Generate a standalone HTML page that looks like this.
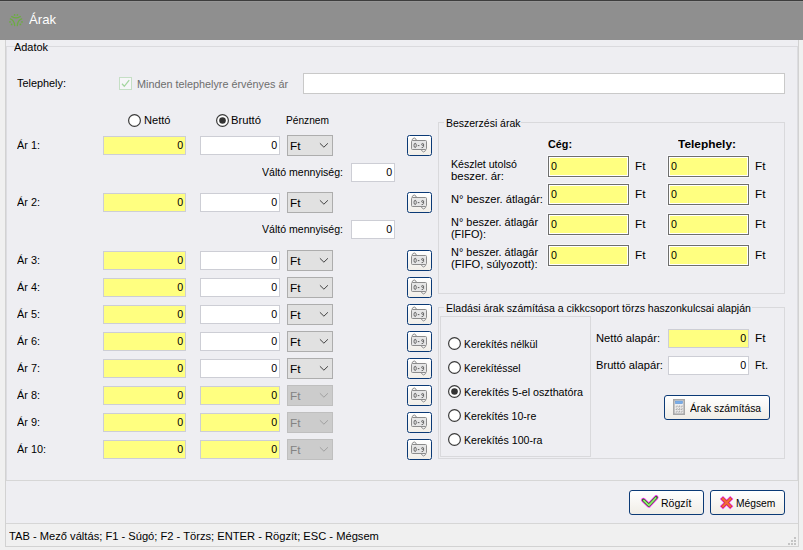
<!DOCTYPE html>
<html><head><meta charset="utf-8"><style>
html,body{margin:0;padding:0;}
body{width:803px;height:550px;overflow:hidden;position:relative;background:#f0f0f0;font-family:"Liberation Sans",sans-serif;}
.t{position:absolute;line-height:14px;white-space:nowrap;}
</style></head><body>
<div style="position:absolute;left:0;top:0;width:803px;height:40px;background:#8f8f8f"></div>
<div style="position:absolute;left:0;top:0;width:803px;height:1px;background:#3d3d3d"></div>
<div style="position:absolute;left:0;top:1px;width:803px;height:1px;background:#979797"></div>
<svg style="position:absolute;left:8px;top:13px" width="16" height="16" viewBox="0 0 16 16">
<g fill="none" stroke="#6cad40" stroke-width="1.25" stroke-linecap="round">
<path d="M3.7 3.5 Q8 6.4 12.3 3.5"/>
<path d="M2.3 5.8 Q6.2 6.8 6.7 12.6"/>
<path d="M13.7 5.8 Q9.8 6.8 9.3 12.6"/>
</g>
<g fill="#6cad40"><circle cx="6.6" cy="1.9" r="0.85"/><circle cx="9.4" cy="1.9" r="0.85"/>
<circle cx="2" cy="8.9" r="0.85"/><circle cx="14" cy="8.9" r="0.85"/>
<circle cx="3.6" cy="11.4" r="0.85"/><circle cx="12.4" cy="11.4" r="0.85"/></g>
</svg>
<div style="position:absolute;left:5px;top:40px;width:792px;height:506px;background:#eeeef2;border:1px solid #d2d2d2;border-top:none"></div>
<div style="position:absolute;left:6px;top:46px;width:792px;height:1px;background:#dadade"></div>
<div style="position:absolute;left:6px;top:47px;width:790px;height:433px;border-left:1px solid #dcdce0;border-right:1px solid #dcdce0"></div>
<div style="position:absolute;left:6px;top:480px;width:792px;height:1px;background:#d6d6d6"></div>
<div style="position:absolute;left:6px;top:523px;width:792px;height:1px;background:#d6d6d6"></div>
<div style="position:absolute;left:6px;top:524px;width:792px;height:22px;background:#f0f0f0"></div>
<div style="position:absolute;left:119px;top:77px;width:11px;height:11px;border:1px solid #c5dfc5;background:#f6f6f8"></div>
<svg style="position:absolute;left:119px;top:77px" width="13" height="13" viewBox="0 0 13 13"><path d="M3 6.8 L5.3 9.3 L10.2 3.2" fill="none" stroke="#a5d6a0" stroke-width="1.3"/></svg>
<div style="position:absolute;left:303px;top:73px;width:480px;height:19px;border:1px solid #c9c9c9;background:#fff"></div>
<svg style="position:absolute;left:128px;top:114px" width="13" height="13" viewBox="0 0 13 13"><circle cx="6.5" cy="6.5" r="5.9" fill="#fff" stroke="#3a3a3a" stroke-width="1.2"/></svg>
<svg style="position:absolute;left:216px;top:114px" width="13" height="13" viewBox="0 0 13 13"><circle cx="6.5" cy="6.5" r="5.9" fill="#fff" stroke="#3a3a3a" stroke-width="1.2"/><circle cx="6.5" cy="6.5" r="3.3" fill="#333"/></svg>
<div style="position:absolute;left:103px;top:136px;width:81px;height:17px;border:1px solid #cdced5;background:#ffff80;"></div>
<div style="position:absolute;left:200px;top:136px;width:78px;height:17px;border:1px solid #cdced5;background:#fff;"></div>
<div style="position:absolute;left:287px;top:135px;width:44px;height:19px;border:1px solid #adadad;background:#e1e1e1"></div>
<svg style="position:absolute;left:319px;top:142px" width="10" height="7" viewBox="0 0 10 7"><path d="M0.9 1.3 L4.9 5.2 L8.9 1.3" fill="none" stroke="#404040" stroke-width="1"/></svg>
<div style="position:absolute;left:407px;top:135px;width:23px;height:19px;border:1px solid #0b3a76;border-radius:2.5px;background:linear-gradient(#ffffff,#f1eee8)"></div>
<svg style="position:absolute;left:407px;top:135px" width="25" height="21" viewBox="0 0 25 21">
<path d="M5.3 5.6 L5.3 4.2 Q7.2 1.6 9.1 4.2 L9.1 5.6" fill="#f4f4f4" stroke="#8c8c8c" stroke-width="1"/>
<path d="M14.6 14.4 L14.6 15.6 Q16.6 18.3 18.6 15.6 L18.6 14.4" fill="#f4f4f4" stroke="#8c8c8c" stroke-width="1"/>
<rect x="4.5" y="5.5" width="15" height="9" rx="1" fill="#e6e6e6" stroke="#8c8c8c" stroke-width="1"/>
<ellipse cx="8.15" cy="10.4" rx="1.15" ry="2.15" fill="none" stroke="#5e5e5e" stroke-width="0.9"/>
<path d="M10.8 10.6 L12.4 10.6" stroke="#5e5e5e" stroke-width="1"/>
<circle cx="15.6" cy="9.4" r="0.95" fill="none" stroke="#5e5e5e" stroke-width="0.9"/>
<path d="M16.55 9.4 L16.55 11.6 Q16.4 12.6 14.6 12.6" fill="none" stroke="#5e5e5e" stroke-width="0.9"/>
</svg>
<div style="position:absolute;left:351px;top:163px;width:42px;height:17px;border:1px solid #cdced5;background:#fff;"></div>
<div style="position:absolute;left:103px;top:193px;width:81px;height:17px;border:1px solid #cdced5;background:#ffff80;"></div>
<div style="position:absolute;left:200px;top:193px;width:78px;height:17px;border:1px solid #cdced5;background:#fff;"></div>
<div style="position:absolute;left:287px;top:192px;width:44px;height:19px;border:1px solid #adadad;background:#e1e1e1"></div>
<svg style="position:absolute;left:319px;top:199px" width="10" height="7" viewBox="0 0 10 7"><path d="M0.9 1.3 L4.9 5.2 L8.9 1.3" fill="none" stroke="#404040" stroke-width="1"/></svg>
<div style="position:absolute;left:407px;top:192px;width:23px;height:19px;border:1px solid #0b3a76;border-radius:2.5px;background:linear-gradient(#ffffff,#f1eee8)"></div>
<svg style="position:absolute;left:407px;top:192px" width="25" height="21" viewBox="0 0 25 21">
<path d="M5.3 5.6 L5.3 4.2 Q7.2 1.6 9.1 4.2 L9.1 5.6" fill="#f4f4f4" stroke="#8c8c8c" stroke-width="1"/>
<path d="M14.6 14.4 L14.6 15.6 Q16.6 18.3 18.6 15.6 L18.6 14.4" fill="#f4f4f4" stroke="#8c8c8c" stroke-width="1"/>
<rect x="4.5" y="5.5" width="15" height="9" rx="1" fill="#e6e6e6" stroke="#8c8c8c" stroke-width="1"/>
<ellipse cx="8.15" cy="10.4" rx="1.15" ry="2.15" fill="none" stroke="#5e5e5e" stroke-width="0.9"/>
<path d="M10.8 10.6 L12.4 10.6" stroke="#5e5e5e" stroke-width="1"/>
<circle cx="15.6" cy="9.4" r="0.95" fill="none" stroke="#5e5e5e" stroke-width="0.9"/>
<path d="M16.55 9.4 L16.55 11.6 Q16.4 12.6 14.6 12.6" fill="none" stroke="#5e5e5e" stroke-width="0.9"/>
</svg>
<div style="position:absolute;left:351px;top:220px;width:42px;height:17px;border:1px solid #cdced5;background:#fff;"></div>
<div style="position:absolute;left:103px;top:251px;width:81px;height:17px;border:1px solid #cdced5;background:#ffff80;"></div>
<div style="position:absolute;left:200px;top:251px;width:78px;height:17px;border:1px solid #cdced5;background:#fff;"></div>
<div style="position:absolute;left:287px;top:250px;width:44px;height:19px;border:1px solid #adadad;background:#e1e1e1"></div>
<svg style="position:absolute;left:319px;top:257px" width="10" height="7" viewBox="0 0 10 7"><path d="M0.9 1.3 L4.9 5.2 L8.9 1.3" fill="none" stroke="#404040" stroke-width="1"/></svg>
<div style="position:absolute;left:407px;top:250px;width:23px;height:19px;border:1px solid #0b3a76;border-radius:2.5px;background:linear-gradient(#ffffff,#f1eee8)"></div>
<svg style="position:absolute;left:407px;top:250px" width="25" height="21" viewBox="0 0 25 21">
<path d="M5.3 5.6 L5.3 4.2 Q7.2 1.6 9.1 4.2 L9.1 5.6" fill="#f4f4f4" stroke="#8c8c8c" stroke-width="1"/>
<path d="M14.6 14.4 L14.6 15.6 Q16.6 18.3 18.6 15.6 L18.6 14.4" fill="#f4f4f4" stroke="#8c8c8c" stroke-width="1"/>
<rect x="4.5" y="5.5" width="15" height="9" rx="1" fill="#e6e6e6" stroke="#8c8c8c" stroke-width="1"/>
<ellipse cx="8.15" cy="10.4" rx="1.15" ry="2.15" fill="none" stroke="#5e5e5e" stroke-width="0.9"/>
<path d="M10.8 10.6 L12.4 10.6" stroke="#5e5e5e" stroke-width="1"/>
<circle cx="15.6" cy="9.4" r="0.95" fill="none" stroke="#5e5e5e" stroke-width="0.9"/>
<path d="M16.55 9.4 L16.55 11.6 Q16.4 12.6 14.6 12.6" fill="none" stroke="#5e5e5e" stroke-width="0.9"/>
</svg>
<div style="position:absolute;left:103px;top:278px;width:81px;height:17px;border:1px solid #cdced5;background:#ffff80;"></div>
<div style="position:absolute;left:200px;top:278px;width:78px;height:17px;border:1px solid #cdced5;background:#fff;"></div>
<div style="position:absolute;left:287px;top:277px;width:44px;height:19px;border:1px solid #adadad;background:#e1e1e1"></div>
<svg style="position:absolute;left:319px;top:284px" width="10" height="7" viewBox="0 0 10 7"><path d="M0.9 1.3 L4.9 5.2 L8.9 1.3" fill="none" stroke="#404040" stroke-width="1"/></svg>
<div style="position:absolute;left:407px;top:277px;width:23px;height:19px;border:1px solid #0b3a76;border-radius:2.5px;background:linear-gradient(#ffffff,#f1eee8)"></div>
<svg style="position:absolute;left:407px;top:277px" width="25" height="21" viewBox="0 0 25 21">
<path d="M5.3 5.6 L5.3 4.2 Q7.2 1.6 9.1 4.2 L9.1 5.6" fill="#f4f4f4" stroke="#8c8c8c" stroke-width="1"/>
<path d="M14.6 14.4 L14.6 15.6 Q16.6 18.3 18.6 15.6 L18.6 14.4" fill="#f4f4f4" stroke="#8c8c8c" stroke-width="1"/>
<rect x="4.5" y="5.5" width="15" height="9" rx="1" fill="#e6e6e6" stroke="#8c8c8c" stroke-width="1"/>
<ellipse cx="8.15" cy="10.4" rx="1.15" ry="2.15" fill="none" stroke="#5e5e5e" stroke-width="0.9"/>
<path d="M10.8 10.6 L12.4 10.6" stroke="#5e5e5e" stroke-width="1"/>
<circle cx="15.6" cy="9.4" r="0.95" fill="none" stroke="#5e5e5e" stroke-width="0.9"/>
<path d="M16.55 9.4 L16.55 11.6 Q16.4 12.6 14.6 12.6" fill="none" stroke="#5e5e5e" stroke-width="0.9"/>
</svg>
<div style="position:absolute;left:103px;top:305px;width:81px;height:17px;border:1px solid #cdced5;background:#ffff80;"></div>
<div style="position:absolute;left:200px;top:305px;width:78px;height:17px;border:1px solid #cdced5;background:#fff;"></div>
<div style="position:absolute;left:287px;top:304px;width:44px;height:19px;border:1px solid #adadad;background:#e1e1e1"></div>
<svg style="position:absolute;left:319px;top:311px" width="10" height="7" viewBox="0 0 10 7"><path d="M0.9 1.3 L4.9 5.2 L8.9 1.3" fill="none" stroke="#404040" stroke-width="1"/></svg>
<div style="position:absolute;left:407px;top:304px;width:23px;height:19px;border:1px solid #0b3a76;border-radius:2.5px;background:linear-gradient(#ffffff,#f1eee8)"></div>
<svg style="position:absolute;left:407px;top:304px" width="25" height="21" viewBox="0 0 25 21">
<path d="M5.3 5.6 L5.3 4.2 Q7.2 1.6 9.1 4.2 L9.1 5.6" fill="#f4f4f4" stroke="#8c8c8c" stroke-width="1"/>
<path d="M14.6 14.4 L14.6 15.6 Q16.6 18.3 18.6 15.6 L18.6 14.4" fill="#f4f4f4" stroke="#8c8c8c" stroke-width="1"/>
<rect x="4.5" y="5.5" width="15" height="9" rx="1" fill="#e6e6e6" stroke="#8c8c8c" stroke-width="1"/>
<ellipse cx="8.15" cy="10.4" rx="1.15" ry="2.15" fill="none" stroke="#5e5e5e" stroke-width="0.9"/>
<path d="M10.8 10.6 L12.4 10.6" stroke="#5e5e5e" stroke-width="1"/>
<circle cx="15.6" cy="9.4" r="0.95" fill="none" stroke="#5e5e5e" stroke-width="0.9"/>
<path d="M16.55 9.4 L16.55 11.6 Q16.4 12.6 14.6 12.6" fill="none" stroke="#5e5e5e" stroke-width="0.9"/>
</svg>
<div style="position:absolute;left:103px;top:332px;width:81px;height:17px;border:1px solid #cdced5;background:#ffff80;"></div>
<div style="position:absolute;left:200px;top:332px;width:78px;height:17px;border:1px solid #cdced5;background:#fff;"></div>
<div style="position:absolute;left:287px;top:331px;width:44px;height:19px;border:1px solid #adadad;background:#e1e1e1"></div>
<svg style="position:absolute;left:319px;top:338px" width="10" height="7" viewBox="0 0 10 7"><path d="M0.9 1.3 L4.9 5.2 L8.9 1.3" fill="none" stroke="#404040" stroke-width="1"/></svg>
<div style="position:absolute;left:407px;top:331px;width:23px;height:19px;border:1px solid #0b3a76;border-radius:2.5px;background:linear-gradient(#ffffff,#f1eee8)"></div>
<svg style="position:absolute;left:407px;top:331px" width="25" height="21" viewBox="0 0 25 21">
<path d="M5.3 5.6 L5.3 4.2 Q7.2 1.6 9.1 4.2 L9.1 5.6" fill="#f4f4f4" stroke="#8c8c8c" stroke-width="1"/>
<path d="M14.6 14.4 L14.6 15.6 Q16.6 18.3 18.6 15.6 L18.6 14.4" fill="#f4f4f4" stroke="#8c8c8c" stroke-width="1"/>
<rect x="4.5" y="5.5" width="15" height="9" rx="1" fill="#e6e6e6" stroke="#8c8c8c" stroke-width="1"/>
<ellipse cx="8.15" cy="10.4" rx="1.15" ry="2.15" fill="none" stroke="#5e5e5e" stroke-width="0.9"/>
<path d="M10.8 10.6 L12.4 10.6" stroke="#5e5e5e" stroke-width="1"/>
<circle cx="15.6" cy="9.4" r="0.95" fill="none" stroke="#5e5e5e" stroke-width="0.9"/>
<path d="M16.55 9.4 L16.55 11.6 Q16.4 12.6 14.6 12.6" fill="none" stroke="#5e5e5e" stroke-width="0.9"/>
</svg>
<div style="position:absolute;left:103px;top:359px;width:81px;height:17px;border:1px solid #cdced5;background:#ffff80;"></div>
<div style="position:absolute;left:200px;top:359px;width:78px;height:17px;border:1px solid #cdced5;background:#fff;"></div>
<div style="position:absolute;left:287px;top:358px;width:44px;height:19px;border:1px solid #adadad;background:#e1e1e1"></div>
<svg style="position:absolute;left:319px;top:365px" width="10" height="7" viewBox="0 0 10 7"><path d="M0.9 1.3 L4.9 5.2 L8.9 1.3" fill="none" stroke="#404040" stroke-width="1"/></svg>
<div style="position:absolute;left:407px;top:358px;width:23px;height:19px;border:1px solid #0b3a76;border-radius:2.5px;background:linear-gradient(#ffffff,#f1eee8)"></div>
<svg style="position:absolute;left:407px;top:358px" width="25" height="21" viewBox="0 0 25 21">
<path d="M5.3 5.6 L5.3 4.2 Q7.2 1.6 9.1 4.2 L9.1 5.6" fill="#f4f4f4" stroke="#8c8c8c" stroke-width="1"/>
<path d="M14.6 14.4 L14.6 15.6 Q16.6 18.3 18.6 15.6 L18.6 14.4" fill="#f4f4f4" stroke="#8c8c8c" stroke-width="1"/>
<rect x="4.5" y="5.5" width="15" height="9" rx="1" fill="#e6e6e6" stroke="#8c8c8c" stroke-width="1"/>
<ellipse cx="8.15" cy="10.4" rx="1.15" ry="2.15" fill="none" stroke="#5e5e5e" stroke-width="0.9"/>
<path d="M10.8 10.6 L12.4 10.6" stroke="#5e5e5e" stroke-width="1"/>
<circle cx="15.6" cy="9.4" r="0.95" fill="none" stroke="#5e5e5e" stroke-width="0.9"/>
<path d="M16.55 9.4 L16.55 11.6 Q16.4 12.6 14.6 12.6" fill="none" stroke="#5e5e5e" stroke-width="0.9"/>
</svg>
<div style="position:absolute;left:103px;top:386px;width:81px;height:17px;border:1px solid #cdced5;background:#ffff80;"></div>
<div style="position:absolute;left:200px;top:386px;width:78px;height:17px;border:1px solid #cdced5;background:#ffff80;"></div>
<div style="position:absolute;left:287px;top:385px;width:44px;height:19px;border:1px solid #bfbfbf;background:#cccccc"></div>
<svg style="position:absolute;left:319px;top:392px" width="10" height="7" viewBox="0 0 10 7"><path d="M0.9 1.3 L4.9 5.2 L8.9 1.3" fill="none" stroke="#a0a0a0" stroke-width="1"/></svg>
<div style="position:absolute;left:407px;top:385px;width:23px;height:19px;border:1px solid #0b3a76;border-radius:2.5px;background:linear-gradient(#ffffff,#f1eee8)"></div>
<svg style="position:absolute;left:407px;top:385px" width="25" height="21" viewBox="0 0 25 21">
<path d="M5.3 5.6 L5.3 4.2 Q7.2 1.6 9.1 4.2 L9.1 5.6" fill="#f4f4f4" stroke="#8c8c8c" stroke-width="1"/>
<path d="M14.6 14.4 L14.6 15.6 Q16.6 18.3 18.6 15.6 L18.6 14.4" fill="#f4f4f4" stroke="#8c8c8c" stroke-width="1"/>
<rect x="4.5" y="5.5" width="15" height="9" rx="1" fill="#e6e6e6" stroke="#8c8c8c" stroke-width="1"/>
<ellipse cx="8.15" cy="10.4" rx="1.15" ry="2.15" fill="none" stroke="#5e5e5e" stroke-width="0.9"/>
<path d="M10.8 10.6 L12.4 10.6" stroke="#5e5e5e" stroke-width="1"/>
<circle cx="15.6" cy="9.4" r="0.95" fill="none" stroke="#5e5e5e" stroke-width="0.9"/>
<path d="M16.55 9.4 L16.55 11.6 Q16.4 12.6 14.6 12.6" fill="none" stroke="#5e5e5e" stroke-width="0.9"/>
</svg>
<div style="position:absolute;left:103px;top:413px;width:81px;height:17px;border:1px solid #cdced5;background:#ffff80;"></div>
<div style="position:absolute;left:200px;top:413px;width:78px;height:17px;border:1px solid #cdced5;background:#ffff80;"></div>
<div style="position:absolute;left:287px;top:412px;width:44px;height:19px;border:1px solid #bfbfbf;background:#cccccc"></div>
<svg style="position:absolute;left:319px;top:419px" width="10" height="7" viewBox="0 0 10 7"><path d="M0.9 1.3 L4.9 5.2 L8.9 1.3" fill="none" stroke="#a0a0a0" stroke-width="1"/></svg>
<div style="position:absolute;left:407px;top:412px;width:23px;height:19px;border:1px solid #0b3a76;border-radius:2.5px;background:linear-gradient(#ffffff,#f1eee8)"></div>
<svg style="position:absolute;left:407px;top:412px" width="25" height="21" viewBox="0 0 25 21">
<path d="M5.3 5.6 L5.3 4.2 Q7.2 1.6 9.1 4.2 L9.1 5.6" fill="#f4f4f4" stroke="#8c8c8c" stroke-width="1"/>
<path d="M14.6 14.4 L14.6 15.6 Q16.6 18.3 18.6 15.6 L18.6 14.4" fill="#f4f4f4" stroke="#8c8c8c" stroke-width="1"/>
<rect x="4.5" y="5.5" width="15" height="9" rx="1" fill="#e6e6e6" stroke="#8c8c8c" stroke-width="1"/>
<ellipse cx="8.15" cy="10.4" rx="1.15" ry="2.15" fill="none" stroke="#5e5e5e" stroke-width="0.9"/>
<path d="M10.8 10.6 L12.4 10.6" stroke="#5e5e5e" stroke-width="1"/>
<circle cx="15.6" cy="9.4" r="0.95" fill="none" stroke="#5e5e5e" stroke-width="0.9"/>
<path d="M16.55 9.4 L16.55 11.6 Q16.4 12.6 14.6 12.6" fill="none" stroke="#5e5e5e" stroke-width="0.9"/>
</svg>
<div style="position:absolute;left:103px;top:440px;width:81px;height:17px;border:1px solid #cdced5;background:#ffff80;"></div>
<div style="position:absolute;left:200px;top:440px;width:78px;height:17px;border:1px solid #cdced5;background:#ffff80;"></div>
<div style="position:absolute;left:287px;top:439px;width:44px;height:19px;border:1px solid #bfbfbf;background:#cccccc"></div>
<svg style="position:absolute;left:319px;top:446px" width="10" height="7" viewBox="0 0 10 7"><path d="M0.9 1.3 L4.9 5.2 L8.9 1.3" fill="none" stroke="#a0a0a0" stroke-width="1"/></svg>
<div style="position:absolute;left:407px;top:439px;width:23px;height:19px;border:1px solid #0b3a76;border-radius:2.5px;background:linear-gradient(#ffffff,#f1eee8)"></div>
<svg style="position:absolute;left:407px;top:439px" width="25" height="21" viewBox="0 0 25 21">
<path d="M5.3 5.6 L5.3 4.2 Q7.2 1.6 9.1 4.2 L9.1 5.6" fill="#f4f4f4" stroke="#8c8c8c" stroke-width="1"/>
<path d="M14.6 14.4 L14.6 15.6 Q16.6 18.3 18.6 15.6 L18.6 14.4" fill="#f4f4f4" stroke="#8c8c8c" stroke-width="1"/>
<rect x="4.5" y="5.5" width="15" height="9" rx="1" fill="#e6e6e6" stroke="#8c8c8c" stroke-width="1"/>
<ellipse cx="8.15" cy="10.4" rx="1.15" ry="2.15" fill="none" stroke="#5e5e5e" stroke-width="0.9"/>
<path d="M10.8 10.6 L12.4 10.6" stroke="#5e5e5e" stroke-width="1"/>
<circle cx="15.6" cy="9.4" r="0.95" fill="none" stroke="#5e5e5e" stroke-width="0.9"/>
<path d="M16.55 9.4 L16.55 11.6 Q16.4 12.6 14.6 12.6" fill="none" stroke="#5e5e5e" stroke-width="0.9"/>
</svg>
<div style="position:absolute;left:438px;top:122px;width:345px;height:170px;border:1px solid #d9d9dc"></div>
<div style="position:absolute;left:444px;top:116px;width:77px;height:12px;background:#eeeef2"></div>
<div style="position:absolute;left:548px;top:156px;width:79px;height:19px;border:1px solid #6e6e6e;background:#ffff80;box-shadow:inset 0 0 0 1px #fff,0 0 0 1px #f7f7f9"></div>
<div style="position:absolute;left:668px;top:156px;width:79px;height:19px;border:1px solid #6e6e6e;background:#ffff80;box-shadow:inset 0 0 0 1px #fff,0 0 0 1px #f7f7f9"></div>
<div style="position:absolute;left:548px;top:184px;width:79px;height:19px;border:1px solid #6e6e6e;background:#ffff80;box-shadow:inset 0 0 0 1px #fff,0 0 0 1px #f7f7f9"></div>
<div style="position:absolute;left:668px;top:184px;width:79px;height:19px;border:1px solid #6e6e6e;background:#ffff80;box-shadow:inset 0 0 0 1px #fff,0 0 0 1px #f7f7f9"></div>
<div style="position:absolute;left:548px;top:214px;width:79px;height:19px;border:1px solid #6e6e6e;background:#ffff80;box-shadow:inset 0 0 0 1px #fff,0 0 0 1px #f7f7f9"></div>
<div style="position:absolute;left:668px;top:214px;width:79px;height:19px;border:1px solid #6e6e6e;background:#ffff80;box-shadow:inset 0 0 0 1px #fff,0 0 0 1px #f7f7f9"></div>
<div style="position:absolute;left:548px;top:245px;width:79px;height:19px;border:1px solid #6e6e6e;background:#ffff80;box-shadow:inset 0 0 0 1px #fff,0 0 0 1px #f7f7f9"></div>
<div style="position:absolute;left:668px;top:245px;width:79px;height:19px;border:1px solid #6e6e6e;background:#ffff80;box-shadow:inset 0 0 0 1px #fff,0 0 0 1px #f7f7f9"></div>
<div style="position:absolute;left:438px;top:307px;width:345px;height:150px;border:1px solid #d9d9dc"></div>
<div style="position:absolute;left:444px;top:302px;width:308px;height:12px;background:#eeeef2"></div>
<div style="position:absolute;left:440px;top:316px;width:149px;height:139px;border:1px solid #d9d9dc"></div>
<svg style="position:absolute;left:448px;top:337px" width="13" height="13" viewBox="0 0 13 13"><circle cx="6.5" cy="6.5" r="5.9" fill="#fff" stroke="#3a3a3a" stroke-width="1.2"/></svg>
<svg style="position:absolute;left:448px;top:361px" width="13" height="13" viewBox="0 0 13 13"><circle cx="6.5" cy="6.5" r="5.9" fill="#fff" stroke="#3a3a3a" stroke-width="1.2"/></svg>
<svg style="position:absolute;left:448px;top:385px" width="13" height="13" viewBox="0 0 13 13"><circle cx="6.5" cy="6.5" r="5.9" fill="#fff" stroke="#3a3a3a" stroke-width="1.2"/><circle cx="6.5" cy="6.5" r="3.3" fill="#333"/></svg>
<svg style="position:absolute;left:448px;top:409px" width="13" height="13" viewBox="0 0 13 13"><circle cx="6.5" cy="6.5" r="5.9" fill="#fff" stroke="#3a3a3a" stroke-width="1.2"/></svg>
<svg style="position:absolute;left:448px;top:433px" width="13" height="13" viewBox="0 0 13 13"><circle cx="6.5" cy="6.5" r="5.9" fill="#fff" stroke="#3a3a3a" stroke-width="1.2"/></svg>
<div style="position:absolute;left:668px;top:329px;width:79px;height:17px;border:1px solid #cdced5;background:#ffff80;"></div>
<div style="position:absolute;left:668px;top:356px;width:79px;height:17px;border:1px solid #cdced5;background:#fff;"></div>
<div style="position:absolute;left:664px;top:395px;width:104px;height:23px;border:1px solid #0b3a76;border-radius:3px;background:linear-gradient(#ffffff,#f0ede6)"></div>
<svg style="position:absolute;left:673px;top:399px" width="13" height="17" viewBox="0 0 13 17">
<rect x="0.8" y="0.8" width="10.4" height="14.4" fill="#ededed" stroke="#a8a8a8" stroke-width="1.6"/>
<rect x="2.4" y="2.1" width="7.2" height="2.6" fill="#78aeea" stroke="#5c90d0" stroke-width="0.5"/>
<path d="M2.6 7.9 L4.1 7.9 L4.1 6.4" fill="none" stroke="#9a9a9a" stroke-width="0.7"/><path d="M5.1 7.9 L6.6 7.9 L6.6 6.4" fill="none" stroke="#9a9a9a" stroke-width="0.7"/><path d="M7.6 7.9 L9.1 7.9 L9.1 6.4" fill="none" stroke="#9a9a9a" stroke-width="0.7"/><path d="M2.6 10.5 L4.1 10.5 L4.1 9.0" fill="none" stroke="#9a9a9a" stroke-width="0.7"/><path d="M5.1 10.5 L6.6 10.5 L6.6 9.0" fill="none" stroke="#9a9a9a" stroke-width="0.7"/><path d="M7.6 10.5 L9.1 10.5 L9.1 9.0" fill="none" stroke="#9a9a9a" stroke-width="0.7"/><path d="M2.6 13.1 L4.1 13.1 L4.1 11.6" fill="none" stroke="#9a9a9a" stroke-width="0.7"/><path d="M5.1 13.1 L6.6 13.1 L6.6 11.6" fill="none" stroke="#9a9a9a" stroke-width="0.7"/><path d="M7.6 13.1 L9.1 13.1 L9.1 11.6" fill="none" stroke="#9a9a9a" stroke-width="0.7"/>
</svg>
<div style="position:absolute;left:629px;top:490px;width:73px;height:23px;border:1px solid #0b3a76;border-radius:3px;background:linear-gradient(#ffffff,#f0ede6)"></div>
<svg style="position:absolute;left:640px;top:494px" width="20" height="16" viewBox="0 0 20 16">
<path d="M3.4 6.1 L8.9 11.3 L16.2 3.5" fill="none" stroke="#ff20ff" stroke-width="4.6" stroke-linejoin="round" stroke-linecap="round"/>
<path d="M3.4 6.1 L8.9 11.3 L16.2 3.5" fill="none" stroke="#2f7a1f" stroke-width="3.1" stroke-linejoin="round" stroke-linecap="round"/>
<path d="M3.4 6.1 L8.9 11.3 L16.2 3.5" fill="none" stroke="#90e870" stroke-width="1.7" stroke-linejoin="round"/>
</svg>
<div style="position:absolute;left:710px;top:490px;width:73px;height:23px;border:1px solid #0b3a76;border-radius:3px;background:linear-gradient(#ffffff,#f0ede6)"></div>
<svg style="position:absolute;left:718px;top:494px" width="18" height="18" viewBox="0 0 18 18">
<path d="M5 5 L12.2 12.2 M12.2 5 L5 12.2" fill="none" stroke="#f030f0" stroke-width="4.4" stroke-linecap="square"/>
<path d="M5 5 L12.2 12.2 M12.2 5 L5 12.2" fill="none" stroke="#c83a18" stroke-width="3.0" stroke-linecap="square"/>
<path d="M5 5 L12.2 12.2 M12.2 5 L5 12.2" fill="none" stroke="#f26a3a" stroke-width="2.0" stroke-linecap="square"/>
</svg>
<svg style="position:absolute;left:787px;top:536px" width="10" height="10" viewBox="0 0 10 10"><g fill="#c4c4c4">
<rect x="7" y="1" width="2" height="2"/><rect x="4" y="4" width="2" height="2"/><rect x="7" y="4" width="2" height="2"/>
<rect x="1" y="7" width="2" height="2"/><rect x="4" y="7" width="2" height="2"/><rect x="7" y="7" width="2" height="2"/></g></svg>
<div class="t" style="left:29px;top:13px;transform-origin:left;transform:scaleX(1.010);font-size:13px;color:#ffffff">Árak</div>
<div class="t" style="left:14px;top:40px;transform-origin:left;transform:scaleX(0.993);font-size:11px;color:#000">Adatok</div>
<div class="t" style="left:17px;top:76px;transform-origin:left;transform:scaleX(0.989);font-size:11px;color:#000">Telephely:</div>
<div class="t" style="left:137px;top:77px;transform-origin:left;transform:scaleX(0.984);font-size:11px;color:#6d6d6d">Minden telephelyre érvényes ár</div>
<div class="t" style="left:143.5px;top:113px;transform-origin:left;transform:scaleX(1.008);font-size:11px;color:#000">Nettó</div>
<div class="t" style="left:231px;top:113px;transform-origin:left;transform:scaleX(1.022);font-size:11px;color:#000">Bruttó</div>
<div class="t" style="left:286px;top:113px;transform-origin:left;transform:scaleX(0.925);font-size:11px;color:#000">Pénznem</div>
<div class="t" style="left:17px;top:138px;transform-origin:left;transform:scaleX(0.990);font-size:11px;color:#000">Ár 1:</div>
<div class="t" style="right:620px;top:138px;transform-origin:right;transform:scaleX(0.970);font-size:11px;color:#000">0</div>
<div class="t" style="right:526px;top:138px;transform-origin:right;transform:scaleX(0.970);font-size:11px;color:#000">0</div>
<div class="t" style="left:289.8px;top:139px;transform-origin:left;transform:scaleX(1.073);font-size:11px;color:#000">Ft</div>
<div class="t" style="left:262px;top:165px;transform-origin:left;transform:scaleX(0.960);font-size:11px;color:#000">Váltó mennyiség:</div>
<div class="t" style="right:411px;top:165px;transform-origin:right;transform:scaleX(0.970);font-size:11px;color:#000">0</div>
<div class="t" style="left:17px;top:195px;transform-origin:left;transform:scaleX(0.990);font-size:11px;color:#000">Ár 2:</div>
<div class="t" style="right:620px;top:195px;transform-origin:right;transform:scaleX(0.970);font-size:11px;color:#000">0</div>
<div class="t" style="right:526px;top:195px;transform-origin:right;transform:scaleX(0.970);font-size:11px;color:#000">0</div>
<div class="t" style="left:289.8px;top:196px;transform-origin:left;transform:scaleX(1.073);font-size:11px;color:#000">Ft</div>
<div class="t" style="left:262px;top:222px;transform-origin:left;transform:scaleX(0.960);font-size:11px;color:#000">Váltó mennyiség:</div>
<div class="t" style="right:411px;top:222px;transform-origin:right;transform:scaleX(0.970);font-size:11px;color:#000">0</div>
<div class="t" style="left:17px;top:253px;transform-origin:left;transform:scaleX(0.990);font-size:11px;color:#000">Ár 3:</div>
<div class="t" style="right:620px;top:253px;transform-origin:right;transform:scaleX(0.970);font-size:11px;color:#000">0</div>
<div class="t" style="right:526px;top:253px;transform-origin:right;transform:scaleX(0.970);font-size:11px;color:#000">0</div>
<div class="t" style="left:289.8px;top:254px;transform-origin:left;transform:scaleX(1.073);font-size:11px;color:#000">Ft</div>
<div class="t" style="left:17px;top:280px;transform-origin:left;transform:scaleX(0.990);font-size:11px;color:#000">Ár 4:</div>
<div class="t" style="right:620px;top:280px;transform-origin:right;transform:scaleX(0.970);font-size:11px;color:#000">0</div>
<div class="t" style="right:526px;top:280px;transform-origin:right;transform:scaleX(0.970);font-size:11px;color:#000">0</div>
<div class="t" style="left:289.8px;top:281px;transform-origin:left;transform:scaleX(1.073);font-size:11px;color:#000">Ft</div>
<div class="t" style="left:17px;top:307px;transform-origin:left;transform:scaleX(0.990);font-size:11px;color:#000">Ár 5:</div>
<div class="t" style="right:620px;top:307px;transform-origin:right;transform:scaleX(0.970);font-size:11px;color:#000">0</div>
<div class="t" style="right:526px;top:307px;transform-origin:right;transform:scaleX(0.970);font-size:11px;color:#000">0</div>
<div class="t" style="left:289.8px;top:308px;transform-origin:left;transform:scaleX(1.073);font-size:11px;color:#000">Ft</div>
<div class="t" style="left:17px;top:334px;transform-origin:left;transform:scaleX(0.990);font-size:11px;color:#000">Ár 6:</div>
<div class="t" style="right:620px;top:334px;transform-origin:right;transform:scaleX(0.970);font-size:11px;color:#000">0</div>
<div class="t" style="right:526px;top:334px;transform-origin:right;transform:scaleX(0.970);font-size:11px;color:#000">0</div>
<div class="t" style="left:289.8px;top:335px;transform-origin:left;transform:scaleX(1.073);font-size:11px;color:#000">Ft</div>
<div class="t" style="left:17px;top:361px;transform-origin:left;transform:scaleX(0.990);font-size:11px;color:#000">Ár 7:</div>
<div class="t" style="right:620px;top:361px;transform-origin:right;transform:scaleX(0.970);font-size:11px;color:#000">0</div>
<div class="t" style="right:526px;top:361px;transform-origin:right;transform:scaleX(0.970);font-size:11px;color:#000">0</div>
<div class="t" style="left:289.8px;top:362px;transform-origin:left;transform:scaleX(1.073);font-size:11px;color:#000">Ft</div>
<div class="t" style="left:17px;top:388px;transform-origin:left;transform:scaleX(0.990);font-size:11px;color:#000">Ár 8:</div>
<div class="t" style="right:620px;top:388px;transform-origin:right;transform:scaleX(0.970);font-size:11px;color:#000">0</div>
<div class="t" style="right:526px;top:388px;transform-origin:right;transform:scaleX(0.970);font-size:11px;color:#000">0</div>
<div class="t" style="left:289.8px;top:389px;transform-origin:left;transform:scaleX(1.073);font-size:11px;color:#838383">Ft</div>
<div class="t" style="left:17px;top:415px;transform-origin:left;transform:scaleX(0.990);font-size:11px;color:#000">Ár 9:</div>
<div class="t" style="right:620px;top:415px;transform-origin:right;transform:scaleX(0.970);font-size:11px;color:#000">0</div>
<div class="t" style="right:526px;top:415px;transform-origin:right;transform:scaleX(0.970);font-size:11px;color:#000">0</div>
<div class="t" style="left:289.8px;top:416px;transform-origin:left;transform:scaleX(1.073);font-size:11px;color:#838383">Ft</div>
<div class="t" style="left:17px;top:442px;transform-origin:left;transform:scaleX(0.988);font-size:11px;color:#000">Ár 10:</div>
<div class="t" style="right:620px;top:442px;transform-origin:right;transform:scaleX(0.970);font-size:11px;color:#000">0</div>
<div class="t" style="right:526px;top:442px;transform-origin:right;transform:scaleX(0.970);font-size:11px;color:#000">0</div>
<div class="t" style="left:289.8px;top:443px;transform-origin:left;transform:scaleX(1.073);font-size:11px;color:#838383">Ft</div>
<div class="t" style="left:445.5px;top:116px;transform-origin:left;transform:scaleX(0.952);font-size:11px;color:#000">Beszerzési árak</div>
<div class="t" style="left:548px;top:137px;transform-origin:left;transform:scaleX(0.981);font-size:11px;font-weight:bold;color:#000">Cég:</div>
<div class="t" style="left:678px;top:137px;transform-origin:left;transform:scaleX(1.082);font-size:11px;font-weight:bold;color:#000">Telephely:</div>
<div class="t" style="left:551px;top:159px;transform-origin:left;transform:scaleX(0.970);font-size:11px;color:#000">0</div>
<div class="t" style="left:671px;top:159px;transform-origin:left;transform:scaleX(0.970);font-size:11px;color:#000">0</div>
<div class="t" style="left:635px;top:159px;transform-origin:left;transform:scaleX(1.073);font-size:11px;color:#000">Ft</div>
<div class="t" style="left:755px;top:159px;transform-origin:left;transform:scaleX(1.073);font-size:11px;color:#000">Ft</div>
<div class="t" style="left:551px;top:187px;transform-origin:left;transform:scaleX(0.970);font-size:11px;color:#000">0</div>
<div class="t" style="left:671px;top:187px;transform-origin:left;transform:scaleX(0.970);font-size:11px;color:#000">0</div>
<div class="t" style="left:635px;top:187px;transform-origin:left;transform:scaleX(1.073);font-size:11px;color:#000">Ft</div>
<div class="t" style="left:755px;top:187px;transform-origin:left;transform:scaleX(1.073);font-size:11px;color:#000">Ft</div>
<div class="t" style="left:551px;top:217px;transform-origin:left;transform:scaleX(0.970);font-size:11px;color:#000">0</div>
<div class="t" style="left:671px;top:217px;transform-origin:left;transform:scaleX(0.970);font-size:11px;color:#000">0</div>
<div class="t" style="left:635px;top:217px;transform-origin:left;transform:scaleX(1.073);font-size:11px;color:#000">Ft</div>
<div class="t" style="left:755px;top:217px;transform-origin:left;transform:scaleX(1.073);font-size:11px;color:#000">Ft</div>
<div class="t" style="left:551px;top:248px;transform-origin:left;transform:scaleX(0.970);font-size:11px;color:#000">0</div>
<div class="t" style="left:671px;top:248px;transform-origin:left;transform:scaleX(0.970);font-size:11px;color:#000">0</div>
<div class="t" style="left:635px;top:248px;transform-origin:left;transform:scaleX(1.073);font-size:11px;color:#000">Ft</div>
<div class="t" style="left:755px;top:248px;transform-origin:left;transform:scaleX(1.073);font-size:11px;color:#000">Ft</div>
<div class="t" style="left:451px;top:156.5px;transform-origin:left;transform:scaleX(0.964);font-size:11px;color:#000">Készlet utolsó</div>
<div class="t" style="left:451px;top:168.5px;transform-origin:left;transform:scaleX(1.032);font-size:11px;color:#000">beszer. ár:</div>
<div class="t" style="left:451px;top:191.5px;transform-origin:left;transform:scaleX(1.015);font-size:11px;color:#000">N° beszer. átlagár:</div>
<div class="t" style="left:451px;top:214.5px;transform-origin:left;transform:scaleX(0.994);font-size:11px;color:#000">N° beszer. átlagár</div>
<div class="t" style="left:451px;top:226.5px;transform-origin:left;transform:scaleX(0.988);font-size:11px;color:#000">(FIFO):</div>
<div class="t" style="left:451px;top:245px;transform-origin:left;transform:scaleX(0.994);font-size:11px;color:#000">N° beszer. átlagár</div>
<div class="t" style="left:451px;top:257px;transform-origin:left;transform:scaleX(1.020);font-size:11px;color:#000">(FIFO, súlyozott):</div>
<div class="t" style="left:445.5px;top:301px;transform-origin:left;transform:scaleX(0.957);font-size:11px;color:#000">Eladási árak számítása a cikkcsoport törzs haszonkulcsai alapján</div>
<div class="t" style="left:463.7px;top:337px;transform-origin:left;transform:scaleX(0.939);font-size:11px;color:#000">Kerekítés nélkül</div>
<div class="t" style="left:463.7px;top:361px;transform-origin:left;transform:scaleX(0.935);font-size:11px;color:#000">Kerekítéssel</div>
<div class="t" style="left:463.7px;top:385px;transform-origin:left;transform:scaleX(0.973);font-size:11px;color:#000">Kerekítés 5-el oszthatóra</div>
<div class="t" style="left:463.7px;top:409px;transform-origin:left;transform:scaleX(0.961);font-size:11px;color:#000">Kerekítés 10-re</div>
<div class="t" style="left:463.7px;top:433px;transform-origin:left;transform:scaleX(0.964);font-size:11px;color:#000">Kerekítés 100-ra</div>
<div class="t" style="left:596px;top:331px;transform-origin:left;transform:scaleX(1.016);font-size:11px;color:#000">Nettó alapár:</div>
<div class="t" style="right:57px;top:331px;transform-origin:right;transform:scaleX(0.970);font-size:11px;color:#000">0</div>
<div class="t" style="left:755px;top:331px;transform-origin:left;transform:scaleX(1.073);font-size:11px;color:#000">Ft</div>
<div class="t" style="left:596px;top:358px;transform-origin:left;transform:scaleX(1.014);font-size:11px;color:#000">Bruttó alapár:</div>
<div class="t" style="right:57px;top:358px;transform-origin:right;transform:scaleX(0.970);font-size:11px;color:#000">0</div>
<div class="t" style="left:755px;top:358px;transform-origin:left;transform:scaleX(1.012);font-size:11px;color:#000">Ft.</div>
<div class="t" style="left:690px;top:401px;transform-origin:left;transform:scaleX(0.937);font-size:11px;color:#000">Árak számítása</div>
<div class="t" style="left:660.5px;top:496px;transform-origin:left;transform:scaleX(0.956);font-size:11px;color:#000">Rögzít</div>
<div class="t" style="left:736px;top:496px;transform-origin:left;transform:scaleX(0.934);font-size:11px;color:#000">Mégsem</div>
<div class="t" style="left:8.7px;top:529px;transform-origin:left;transform:scaleX(1.013);font-size:11px;color:#000">TAB - Mező váltás; F1 - Súgó; F2 - Törzs; ENTER - Rögzít; ESC - Mégsem</div>
</body></html>
